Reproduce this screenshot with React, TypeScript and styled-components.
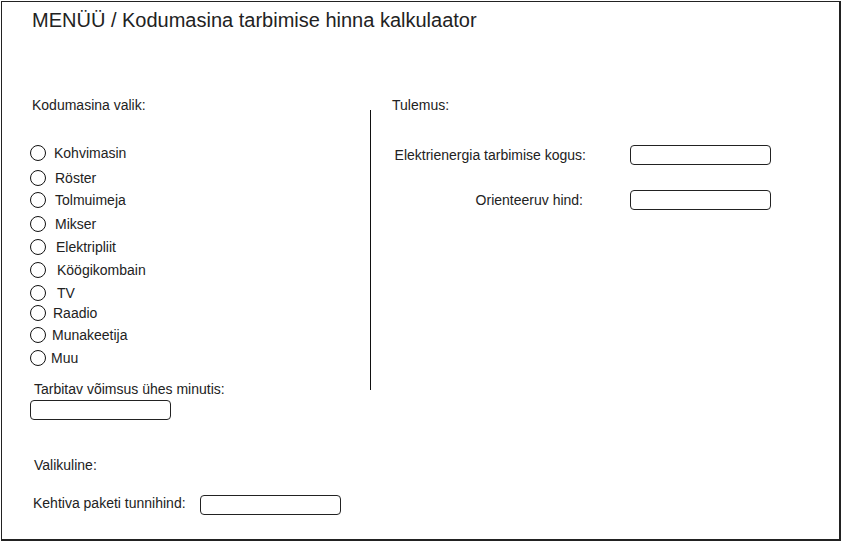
import styled, { createGlobalStyle } from "styled-components";

const GlobalStyle = createGlobalStyle`
    html, body {
        margin: 0;
        padding: 0;
        background: #fff;
    }
    * {
        box-sizing: border-box;
    }
`;

// seadmed: vahe eelmisest reast ja teksti nihe ringist
const appliances = [
    { name: "Kohvimasin", gap: 0, indent: 8 },
    { name: "Röster", gap: 9, indent: 9 },
    { name: "Tolmuimeja", gap: 6, indent: 9 },
    { name: "Mikser", gap: 8, indent: 9 },
    { name: "Elektripliit", gap: 7, indent: 10 },
    { name: "Köögikombain", gap: 7, indent: 11 },
    { name: "TV", gap: 7, indent: 11 },
    { name: "Raadio", gap: 4, indent: 7 },
    { name: "Munakeetija", gap: 6, indent: 6 },
    { name: "Muu", gap: 7, indent: 5 },
];

export default function App() {
    return (
        <>
            <GlobalStyle />
            <Frame>
                <Title>MENÜÜ / Kodumasina tarbimise hinna kalkulaator</Title>
                <Main>
                    <LeftColumn>
                        <Label $pad={2}>Kodumasina valik:</Label>
                        <OptionList>
                            {appliances.map((item) => (
                                <Option key={item.name} $gap={item.gap}>
                                    <Radio />
                                    <OptionText $indent={item.indent}>{item.name}</OptionText>
                                </Option>
                            ))}
                        </OptionList>
                        <Label $pad={4} $top={15}>
                            Tarbitav võimsus ühes minutis:
                        </Label>
                        <Field $top={3} />
                    </LeftColumn>
                    <Divider />
                    <RightColumn>
                        <Label $pad={0}>Tulemus:</Label>
                        <ResultGrid>
                            <ResultLabel>Elektrienergia tarbimise kogus:</ResultLabel>
                            <Field />
                            <ResultLabel $shift={3}>Orienteeruv hind:</ResultLabel>
                            <Field />
                        </ResultGrid>
                    </RightColumn>
                </Main>
                <Optional>
                    <Label $pad={4}>Valikuline:</Label>
                    <PriceRow>
                        <Label $pad={3}>Kehtiva paketi tunnihind:</Label>
                        <Field />
                    </PriceRow>
                </Optional>
            </Frame>
        </>
    );
}

// style
const Frame = styled.div`
    margin: 1px 0 0 1px;
    width: 840px;
    height: 540px;
    padding: 6px 0 0 28px;
    border: 1px solid #222;
    border-right-width: 2px;
    border-bottom-width: 2px;
    font-family: "Liberation Sans", Arial, sans-serif;
    color: #222;
`;

const Title = styled.div`
    font-size: 20px;
    line-height: 24px;
    padding-left: 2px;
    margin-bottom: 65px;
`;

const Main = styled.div`
    display: flex;
    align-items: flex-start;
`;

const LeftColumn = styled.div`
    width: 340px;
    display: flex;
    flex-direction: column;
    align-items: flex-start;
`;

const Label = styled.div<{ $pad?: number; $top?: number }>`
    font-size: 14px;
    line-height: 16px;
    padding-left: ${(props) => props.$pad ?? 0}px;
    margin-top: ${(props) => props.$top ?? 0}px;
    white-space: nowrap;
`;

const OptionList = styled.div`
    margin-top: 32px;
    display: flex;
    flex-direction: column;
`;

const Option = styled.div<{ $gap: number }>`
    display: flex;
    align-items: center;
    height: 16px;
    margin-top: ${(props) => props.$gap}px;
`;

const Radio = styled.span`
    width: 16px;
    height: 16px;
    border: 1px solid #111;
    border-radius: 50%;
    flex: none;
`;

const OptionText = styled.span<{ $indent: number }>`
    font-size: 14px;
    line-height: 16px;
    margin-left: ${(props) => props.$indent}px;
`;

const Field = styled.div<{ $top?: number }>`
    width: 141px;
    height: 20px;
    margin-top: ${(props) => props.$top ?? 0}px;
    border: 1px solid #222;
    border-radius: 4px;
    background: #fff;
`;

const Divider = styled.div`
    width: 1px;
    height: 280px;
    margin-top: 13px;
    background: #111;
    flex: none;
`;

const RightColumn = styled.div`
    padding-left: 21px;
    display: flex;
    flex-direction: column;
`;

const ResultGrid = styled.div`
    display: grid;
    grid-template-columns: 194px 141px;
    column-gap: 44px;
    row-gap: 25px;
    align-items: center;
    margin-top: 32px;
`;

const ResultLabel = styled.div<{ $shift?: number }>`
    font-size: 14px;
    line-height: 16px;
    text-align: right;
    white-space: nowrap;
    padding-right: ${(props) => props.$shift ?? 0}px;
`;

const Optional = styled.div`
    margin-top: 37px;
    display: flex;
    flex-direction: column;
    gap: 22px;
`;

const PriceRow = styled.div`
    display: flex;
    align-items: flex-start;
    gap: 14px;
`;
